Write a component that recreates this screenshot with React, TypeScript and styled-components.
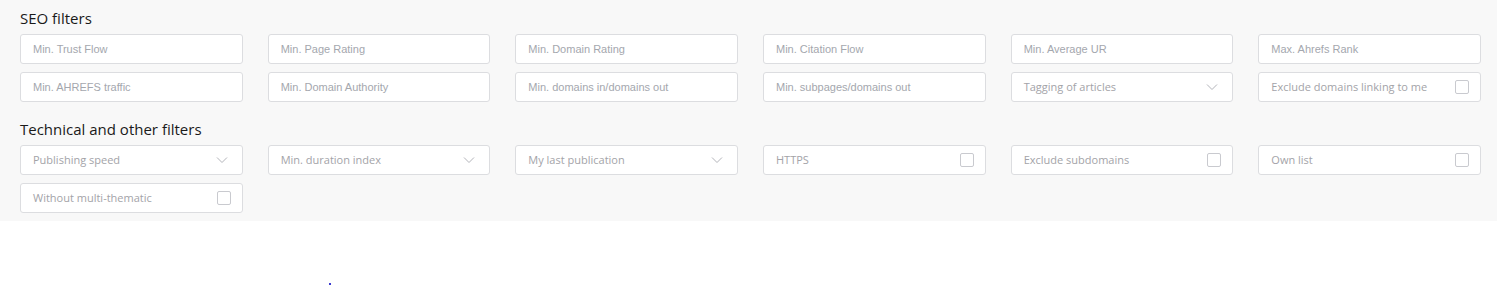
import React from "react";
import styled, { createGlobalStyle } from "styled-components";

const GlobalStyle = createGlobalStyle`
  html, body {
    margin: 0;
    padding: 0;
    background: #ffffff;
  }
  * {
    box-sizing: border-box;
  }
`;

const Panel = styled.section`
  background: #f8f8f8;
  padding: 8px 16px 8px 20px;
`;

const Heading = styled.h3<{ $first?: boolean }>`
  margin: ${({ $first }) => ($first ? "0 0 6px" : "17px 0 6px")};
  font-family: "Open Sans", "Liberation Sans", sans-serif;
  font-size: 15px;
  font-weight: 400;
  line-height: 20px;
  color: #1a1a1a;
`;

const Grid = styled.div`
  display: grid;
  grid-template-columns: repeat(6, 1fr);
  column-gap: 25px;
  row-gap: 8px;
`;

const Field = styled.input`
  height: 30px;
  width: 100%;
  border: 1px solid #dcdde0;
  border-radius: 3px;
  background: #fff;
  padding: 0 12px 1px;
  font-family: "Liberation Sans", Arial, sans-serif;
  font-size: 11px;
  color: #333;
  outline: none;

  &::placeholder {
    color: #a4a7ae;
  }
`;

const Box = styled.div`
  height: 30px;
  display: flex;
  align-items: center;
  justify-content: space-between;
  border: 1px solid #dcdde0;
  border-radius: 3px;
  background: #fff;
  padding: 0 11px 2px 12px;
  font-family: "Open Sans", "Liberation Sans", sans-serif;
  font-size: 11px;
  color: #a3a3a8;
`;

const Tick = styled.span`
  width: 14px;
  height: 14px;
  margin-top: 2px;
  border: 1px solid #c9cacf;
  border-radius: 2px;
  background: #fff;
`;

const Chevron = styled.svg`
  width: 12px;
  height: 8px;
  margin: 2px 3px 0 0;
`;

const Below = styled.div`
  height: 64px;
  position: relative;
`;

const Speck = styled.span`
  position: absolute;
  left: 329px;
  bottom: 0;
  width: 2px;
  height: 2px;
  background: #3b3bd0;
`;

const SelectBox = ({ label }: { label: string }) => (
  <Box>
    {label}
    <Chevron viewBox="0 0 12 8">
      <path d="M1 1.5 L6 6.5 L11 1.5" fill="none" stroke="#b3b4ba" strokeWidth="1" />
    </Chevron>
  </Box>
);

const CheckBox = ({ label }: { label: string }) => (
  <Box>
    {label}
    <Tick />
  </Box>
);

const seoInputs = [
  "Min. Trust Flow",
  "Min. Page Rating",
  "Min. Domain Rating",
  "Min. Citation Flow",
  "Min. Average UR",
  "Max. Ahrefs Rank",
  "Min. AHREFS traffic",
  "Min. Domain Authority",
  "Min. domains in/domains out",
  "Min. subpages/domains out",
];

export default function App() {
  return (
    <>
      <GlobalStyle />
      <Panel>
        <Heading $first>SEO filters</Heading>
        <Grid>
          {seoInputs.map((p) => (
            <Field key={p} placeholder={p} />
          ))}
          <SelectBox label="Tagging of articles" />
          <CheckBox label="Exclude domains linking to me" />
        </Grid>
        <Heading>Technical and other filters</Heading>
        <Grid>
          <SelectBox label="Publishing speed" />
          <SelectBox label="Min. duration index" />
          <SelectBox label="My last publication" />
          <CheckBox label="HTTPS" />
          <CheckBox label="Exclude subdomains" />
          <CheckBox label="Own list" />
          <CheckBox label="Without multi-thematic" />
        </Grid>
      </Panel>
      <Below>
        <Speck />
      </Below>
    </>
  );
}
